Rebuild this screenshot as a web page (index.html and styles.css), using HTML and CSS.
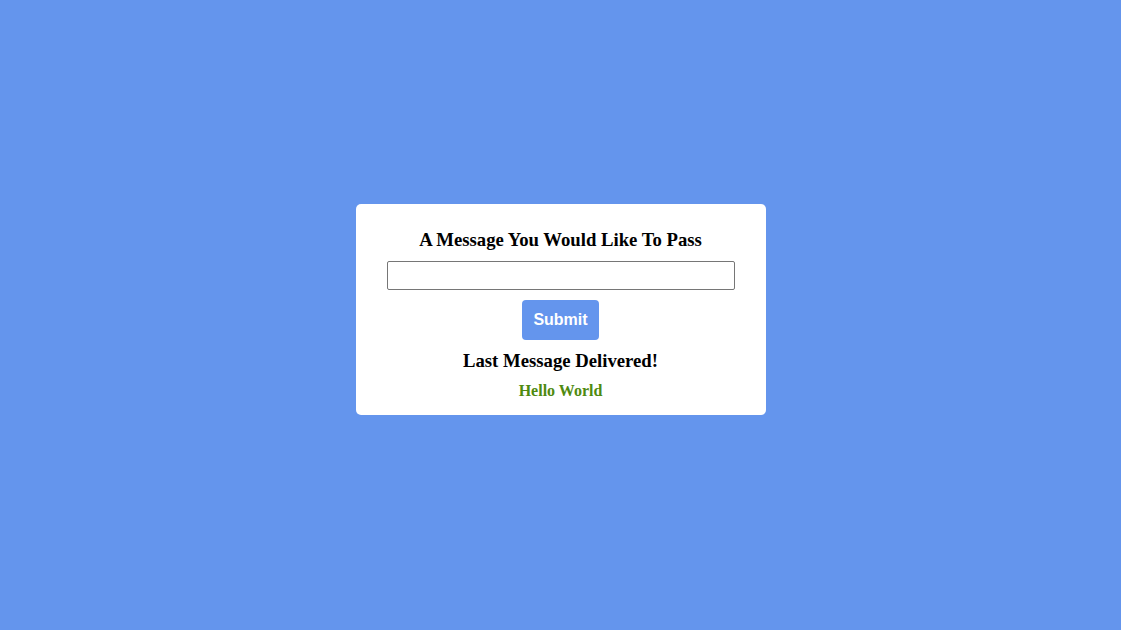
FILE: index.html
```html
<!DOCTYPE html>
<html>
<head>
<meta charset="utf-8">
<link rel="stylesheet" href="styles.css">
</head>
<body>
<div class="card">
  <h3 class="title">A Message You Would Like To Pass</h3>
  <input class="field" type="text">
  <button class="submit">Submit</button>
  <h3 class="title">Last Message Delivered!</h3>
  <h4 class="message">Hello World</h4>
</div>
</body>
</html>
```
FILE: styles.css
```css
html, body {
  margin: 0;
  padding: 0;
}
body {
  background: #6495ED;
  min-height: 100vh;
  display: flex;
  align-items: center;
  justify-content: center;
  font-family: "Liberation Serif", "Times New Roman", serif;
}
.card {
  box-sizing: border-box;
  width: 410px;
  background: #fff;
  border-radius: 5px;
  padding: 25px 31px 15px;
  display: flex;
  flex-direction: column;
  align-items: center;
  gap: 10px;
  margin-bottom: 11px;
}
.title {
  margin: 0;
  font-size: 18.72px;
  font-weight: bold;
  color: #000;
}
.field {
  box-sizing: border-box;
  width: 100%;
  height: 29px;
  border: 1px solid #767676;
  border-radius: 2px;
  margin: 0;
  padding: 1px 2px;
  font-size: 13px;
}
.submit {
  height: 40px;
  padding: 0 11px;
  border: none;
  border-radius: 4px;
  background: #6495ED;
  color: #fff;
  font-family: "Liberation Sans", Arial, sans-serif;
  font-size: 16px;
  font-weight: bold;
  margin: 0;
}
.message {
  margin: 0;
  font-size: 16px;
  font-weight: bold;
  color: #4F8A10;
}
```
